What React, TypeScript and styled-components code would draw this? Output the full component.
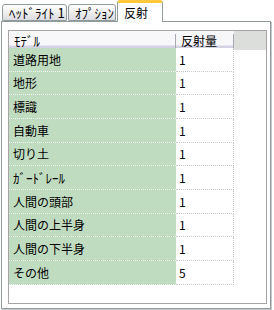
import React from "react";
import styled, { createGlobalStyle } from "styled-components";

const Global = createGlobalStyle`
  html, body { margin: 0; padding: 0; background: #ffffff; }
  body { font-family: "MS UI Gothic", "Noto Sans CJK JP", "Noto Sans", sans-serif; font-size: 12px; color: #000; }
`;

const Frame = styled.div`
  width: 274px;
  height: 310px;
  background: #ffffff;
  display: flex;
  flex-direction: column;
`;

const TabStrip = styled.div`
  display: flex;
  align-items: flex-end;
  height: 21px;
  padding-left: 2px;
  gap: 1px;
  position: relative;
  z-index: 1;
`;

const Tab = styled.div<{ $active?: boolean; $w: number }>`
  box-sizing: border-box;
  width: ${(p) => p.$w}px;
  height: ${(p) => (p.$active ? 22 : 17)}px;
  margin-bottom: ${(p) => (p.$active ? -1 : 0)}px;
  border: 1px solid #919b9c;
  border-bottom: ${(p) => (p.$active ? "none" : "1px solid #919b9c")};
  border-top: ${(p) => (p.$active ? "3px solid #ffc83c" : "1px solid #919b9c")};
  border-radius: 3px 3px 0 0;
  background: ${(p) =>
    p.$active ? "#ffffff" : "linear-gradient(#ffffff, #f0f0ee 45%, #dcdce2)"};
  display: flex;
  align-items: center;
  padding-left: 6px;
  padding-top: ${(p) => (p.$active ? 0 : 1)}px;
  white-space: nowrap;
  font-size: 12px;
  line-height: 12px;
`;

const Kana = styled.span`
  font-size: 13px;
`;

const Panel = styled.div`
  box-sizing: border-box;
  margin: 0 3px 1px 1px;
  height: 289px;
  border: 1px solid #919b9c;
  box-shadow: 1px 1px 0 #c5c9cc;
  padding: 8px 3px 4px 6px;
  background: #ffffff;
  display: flex;
`;

const Grid = styled.div`
  flex: 1;
  border: 1px solid #a5a5a5;
  display: flex;
  flex-direction: column;
  background: #ffffff;
`;

const HeaderRow = styled.div`
  display: grid;
  grid-template-columns: 167px 58px 1fr;
  height: 15px;
  background: #f7f7fa;
  border-bottom: 2px solid #d4d3e4;
  box-shadow: inset 0 -1px 0 #e6e5ef;
`;

const HeaderCell = styled.div<{ $blank?: boolean; $divider?: boolean }>`
  position: relative;
  display: flex;
  align-items: center;
  padding-left: ${(p) => (p.$divider ? 5 : 6)}px;
  background: ${(p) => (p.$blank ? "#dcdedc" : "transparent")};
  font-size: 12px;
  &::after {
    content: "";
    display: ${(p) => (p.$divider ? "block" : "none")};
    position: absolute;
    right: 0;
    top: 3px;
    bottom: 2px;
    width: 1px;
    background: #a9a9b4;
  }
`;

const Row = styled.div`
  display: grid;
  grid-template-columns: 167px 58px 1fr;
  height: 23.67px;
`;

const NameCell = styled.div`
  box-sizing: border-box;
  background: #c0dcc0;
  border-bottom: 1px dotted #f4f8f4;
  display: flex;
  align-items: center;
  padding-left: 4px;
  font-size: 12px;
`;

const ValueCell = styled.div`
  box-sizing: border-box;
  border-bottom: 1px dotted #c8c8c8;
  border-right: 1px dotted #c8c8c8;
  display: flex;
  align-items: center;
  padding-left: 3px;
  font-size: 12px;
`;

const Empty = styled.div``;

const rows: [React.ReactNode, string, string][] = [
  ["道路用地", "1", "a"],
  ["地形", "1", "b"],
  ["標識", "1", "c"],
  ["自動車", "1", "d"],
  ["切り土", "1", "e"],
  [<Kana>ｶﾞｰﾄﾞﾚｰﾙ</Kana>, "1", "f"],
  ["人間の頭部", "1", "g"],
  ["人間の上半身", "1", "h"],
  ["人間の下半身", "1", "i"],
  ["その他", "5", "j"],
];

export default function App() {
  return (
    <Frame>
      <Global />
      <TabStrip>
        <Tab $w={65}>
          <Kana>ﾍｯﾄﾞﾗｲﾄ 1</Kana>
        </Tab>
        <Tab $w={48}>
          <Kana>ｵﾌﾟｼｮﾝ</Kana>
        </Tab>
        <Tab $w={46} $active>
          反射
        </Tab>
      </TabStrip>
      <Panel>
        <Grid>
          <HeaderRow>
            <HeaderCell $divider>
              <Kana>ﾓﾃﾞﾙ</Kana>
            </HeaderCell>
            <HeaderCell $divider>反射量</HeaderCell>
            <HeaderCell $blank />
          </HeaderRow>
          {rows.map(([n, v, k]) => (
            <Row key={k}>
              <NameCell>{n}</NameCell>
              <ValueCell>{v}</ValueCell>
              <Empty />
            </Row>
          ))}
        </Grid>
      </Panel>
    </Frame>
  );
}
